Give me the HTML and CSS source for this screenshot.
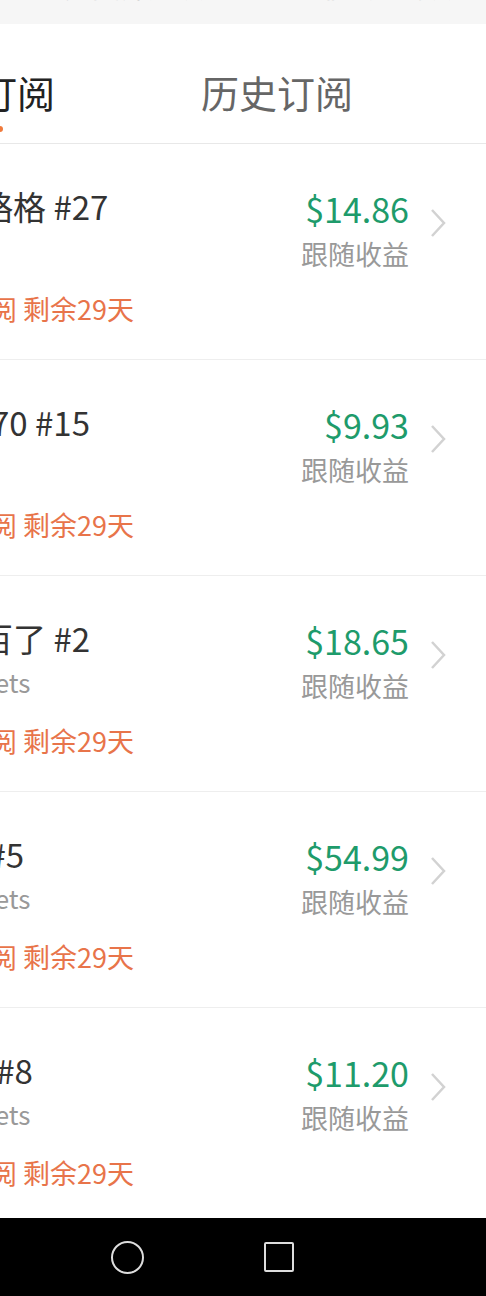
FILE: index.html
```html
<!DOCTYPE html>
<html lang="zh-CN">
<head>
    <meta charset="UTF-8">
    <meta name="viewport" content="width=device-width, initial-scale=1.0">
    <title>订阅</title>
    <link rel="stylesheet" href="styles.css">
</head>
<body>
    <div class="filter-bar">
        <span class="filter">分类筛选项</span>
        <span class="filter">排序方式项</span>
    </div>

    <div class="tabs">
        <div class="tab active">当前订阅</div>
        <div class="tab">历史订阅</div>
    </div>

    <div class="list">
        <div class="item">
            <div class="info">
                <div class="title">策略格 #27</div>
                <div class="sub">&nbsp;</div>
                <div class="note">已订阅 剩余29天</div>
            </div>
            <div class="profit">
                <div class="amount">$14.86</div>
                <div class="label">跟随收益</div>
            </div>
            <svg class="chevron" viewBox="0 0 16 30"><path d="M2 2 L14 15 L2 28" /></svg>
        </div>

        <div class="item">
            <div class="info">
                <div class="title">KD70 #15</div>
                <div class="sub">&nbsp;</div>
                <div class="note">已订阅 剩余29天</div>
            </div>
            <div class="profit">
                <div class="amount">$9.93</div>
                <div class="label">跟随收益</div>
            </div>
            <svg class="chevron" viewBox="0 0 16 30"><path d="M2 2 L14 15 L2 28" /></svg>
        </div>

        <div class="item">
            <div class="info">
                <div class="title">一百了 #2</div>
                <div class="sub">Markets</div>
                <div class="note">已订阅 剩余29天</div>
            </div>
            <div class="profit">
                <div class="amount">$18.65</div>
                <div class="label">跟随收益</div>
            </div>
            <svg class="chevron" viewBox="0 0 16 30"><path d="M2 2 L14 15 L2 28" /></svg>
        </div>

        <div class="item">
            <div class="info">
                <div class="title">双 #5</div>
                <div class="sub">Markets</div>
                <div class="note">已订阅 剩余29天</div>
            </div>
            <div class="profit">
                <div class="amount">$54.99</div>
                <div class="label">跟随收益</div>
            </div>
            <svg class="chevron" viewBox="0 0 16 30"><path d="M2 2 L14 15 L2 28" /></svg>
        </div>

        <div class="item">
            <div class="info">
                <div class="title">AB #8</div>
                <div class="sub">Markets</div>
                <div class="note">已订阅 剩余29天</div>
            </div>
            <div class="profit">
                <div class="amount">$11.20</div>
                <div class="label">跟随收益</div>
            </div>
            <svg class="chevron" viewBox="0 0 16 30"><path d="M2 2 L14 15 L2 28" /></svg>
        </div>
    </div>

    <div class="navbar">
        <span class="nav-home"></span>
        <span class="nav-recent"></span>
    </div>
</body>
</html>
```

FILE: styles.css
```css
html, body {
    margin: 0;
    padding: 0;
}
body {
    width: 486px;
    height: 1296px;
    overflow: hidden;
    display: flex;
    flex-direction: column;
    background-color: #fff;
    font-family: 'Noto Sans CJK SC', 'Noto Sans', sans-serif;
    color: #333;
}

/* top filter strip, scrolled mostly out of view */
.filter-bar {
    height: 24px;
    flex-shrink: 0;
    background-color: #f6f6f6;
    display: flex;
    align-items: flex-end;
    overflow: hidden;
}
.filter {
    font-size: 28px;
    line-height: 40px;
    margin-bottom: 18px;
    color: #c4c4c4;
}
.filter:first-child {
    margin-left: 64px;
}
.filter:last-child {
    margin-left: 108px;
}

/* tabs */
.tabs {
    height: 119px;
    flex-shrink: 0;
    display: flex;
    margin-left: -170px;
    border-bottom: 1px solid #e8e8e8;
}
.tab {
    flex: 0 0 298px;
    text-align: center;
    font-size: 38px;
    line-height: 52px;
    padding-top: 42px;
    color: #666;
    position: relative;
}
.tab.active {
    color: #222;
}
.tab.active::after {
    content: '';
    position: absolute;
    left: 125px;
    bottom: 11px;
    width: 48px;
    height: 6px;
    border-radius: 3px;
    background-color: #f07a3c;
}

/* list */
.list {
    flex: 1;
    overflow: hidden;
}
.item {
    display: flex;
    align-items: flex-start;
    height: 215px;
    border-bottom: 1px solid #eee;
    padding-right: 40px;
}
.info {
    flex: 1;
    min-width: 0;
    margin-left: -53px;
    padding-top: 38px;
    white-space: nowrap;
}
.title {
    font-size: 33px;
    line-height: 48px;
    color: #333;
}
.sub {
    font-size: 26px;
    line-height: 40px;
    margin-left: -12px;
    color: #999;
}
.note {
    font-size: 27px;
    line-height: 40px;
    margin-top: 19px;
    margin-left: -11px;
    color: #e8744a;
}
.profit {
    padding-top: 42px;
    text-align: right;
}
.amount {
    font-size: 34px;
    line-height: 46px;
    color: #1e9b6b;
}
.label {
    font-size: 27px;
    line-height: 40px;
    margin-top: 2px;
    color: #999;
}
.chevron {
    width: 16px;
    height: 30px;
    margin-left: 21px;
    margin-top: 64px;
    fill: none;
    stroke: #d2d2d2;
    stroke-width: 2.5;
}

/* system navigation */
.navbar {
    height: 78px;
    flex-shrink: 0;
    background-color: #000;
    display: flex;
    align-items: center;
    padding-left: 111px;
    gap: 120px;
}
.nav-home {
    width: 29px;
    height: 29px;
    border: 2px solid #ddd;
    border-radius: 50%;
}
.nav-recent {
    width: 26px;
    height: 26px;
    border: 2px solid #ddd;
    border-radius: 2px;
}
```
